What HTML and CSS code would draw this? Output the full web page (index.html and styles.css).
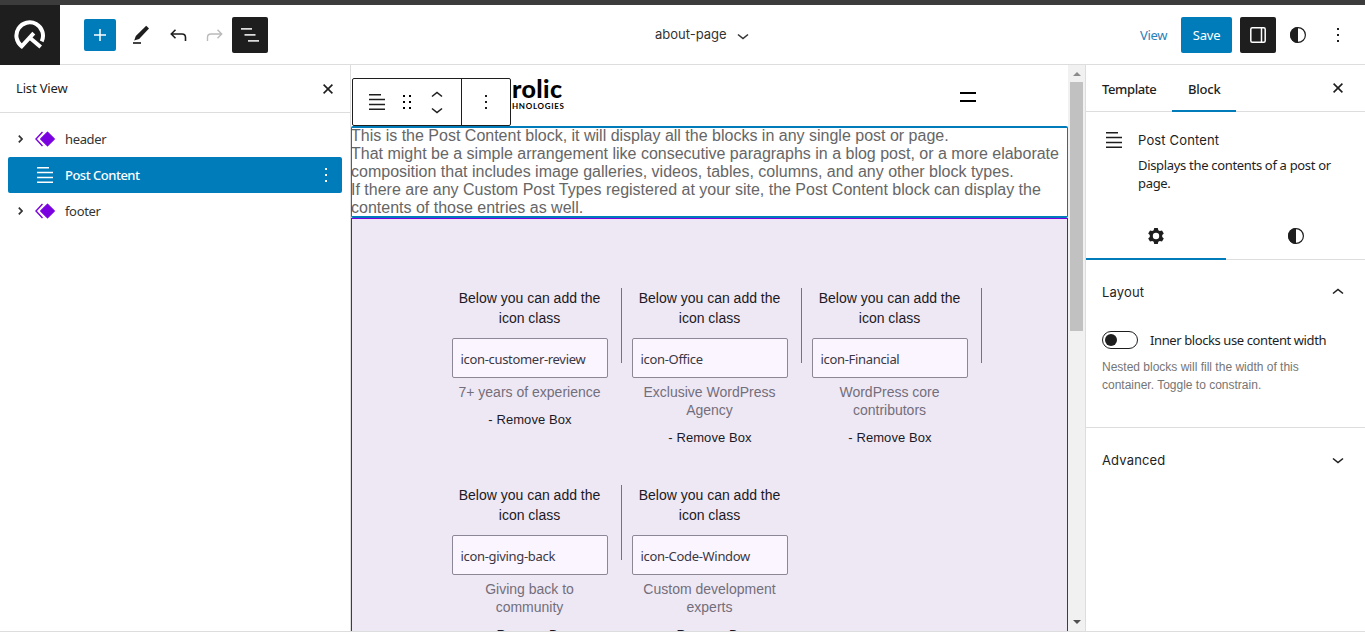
FILE: index.html
```html
<!DOCTYPE html>
<html lang="en">
<head>
<meta charset="utf-8">
<title>about-page</title>
<link rel="stylesheet" href="styles.css">
</head>
<body>
<svg width="0" height="0" class="defs">
  <symbol id="diamond" viewBox="0 0 20 16"><path d="M12.500 1.200 19.300 8l-6.800 6.800L5.700 8z" fill="#7a00df" stroke="#7a00df" stroke-linejoin="round" stroke-width="1.200"/><path d="M7.500 1 1 8l6.500 7" fill="none" stroke="#7a00df" stroke-width="1.400"/></symbol>
  <symbol id="lines" viewBox="0 0 16 16"><path d="M0 16h16v-1.500H0zM0 11.200h16V9.700H0zM0 4.800v1.500h16V4.800zM12 0H0v1.500h12z" fill="currentColor"/></symbol>
  <symbol id="dots" viewBox="0 0 2 14"><path d="M0 0h2v2H0zM0 6h2v2H0zM0 12h2v2H0z" fill="currentColor"/></symbol>
  <symbol id="down" viewBox="0 0 12 7"><path d="M1 1.500l5 4 5-4" fill="none" stroke="currentColor" stroke-width="1.600"/></symbol>
  <symbol id="up" viewBox="0 0 12 7"><path d="M1 5.500l5-4 5 4" fill="none" stroke="currentColor" stroke-width="1.600"/></symbol>
  <symbol id="close" viewBox="0 0 10 10"><path d="M.6.6l8.800 8.800M9.400.6.6 9.400" stroke="currentColor" stroke-width="1.600"/></symbol>
  <symbol id="right" viewBox="0 0 5 8"><path d="M.8.7 4 4 .8 7.300" fill="none" stroke="currentColor" stroke-width="1.700"/></symbol>
  <symbol id="half" viewBox="0 0 16 16"><circle cx="8" cy="8" r="7.400" fill="none" stroke="currentColor" stroke-width="1.200"/><path d="M8 0a8 8 0 0 0 0 16z" fill="currentColor"/></symbol>
</svg>

<div class="strip"></div>
<header class="topbar">
  <div class="logo">
    <svg width="32" height="30" viewBox="0 0 32 30" fill="none" stroke="#fff" stroke-width="4"><path d="M27.700 21.400A13.300 13.300 0 1 0 7.700 26.300L19.800 13.200"/><path d="M15.200 17.200 26.700 27"/></svg>
  </div>
  <div class="tools">
    <button class="add"><svg width="12" height="12" viewBox="0 0 12 12"><path d="M6 0v12M0 6h12" stroke="#fff" stroke-width="1.500"/></svg></button>
    <svg class="pencil" width="17" height="20" viewBox="0 0 17 20"><path d="M13.200.8 16 3.400 6.100 14.100 1.200 15.600 2.800 10.900z" fill="#1e1e1e"/><path d="M0 17h8v2H0z" fill="#444"/></svg>
    <svg class="undo" width="17" height="13" viewBox="0 0 17 13" fill="none" stroke="#1e1e1e" stroke-width="1.600"><path d="M5.500.8 1.300 5l4.200 4.200M1.500 5H12q3.500 0 3.500 3.500V12"/></svg>
    <svg class="redo" width="17" height="13" viewBox="0 0 17 13" fill="none" stroke="#bbb" stroke-width="1.400"><path d="M11.500.8 15.700 5l-4.200 4.200M15.500 5H5Q1.500 5 1.500 8.500V12"/></svg>
    <button class="dark"><svg width="18" height="14" viewBox="0 0 18 14" fill="#ddd"><path d="M0 0h11v1.800H0zM3.500 6h11v1.800h-11zM7 12h11v1.800H7z"/></svg></button>
  </div>
  <div class="doc"><span>about-page</span><svg width="12" height="7"><use href="#down"/></svg></div>
  <div class="actions">
    <a class="view">View</a>
    <button class="save">Save</button>
    <button class="dark"><svg width="16" height="16" viewBox="0 0 16 16" fill="none" stroke="#fff"><rect x=".8" y=".8" width="14.400" height="14.400" rx="1.500" stroke-width="1.500"/><path d="M11.500 1v14" stroke-width="1.500"/></svg></button>
    <svg class="contrast" width="16" height="16"><use href="#half"/></svg>
    <svg class="more" width="2" height="14"><use href="#dots"/></svg>
  </div>
</header>

<main class="workspace">
  <aside class="list">
    <div class="list-head"><span>List View</span><svg width="10" height="10"><use href="#close"/></svg></div>
    <div class="rows">
      <div class="row"><svg class="arrow" width="5" height="8"><use href="#right"/></svg><svg class="kind" width="20" height="16"><use href="#diamond"/></svg><span>header</span></div>
      <div class="row selected"><svg class="kind lines" width="16" height="16"><use href="#lines"/></svg><span class="sel-name">Post Content</span><svg class="row-more" width="2" height="14"><use href="#dots"/></svg></div>
      <div class="row"><svg class="arrow" width="5" height="8"><use href="#right"/></svg><svg class="kind" width="20" height="16"><use href="#diamond"/></svg><span>footer</span></div>
    </div>
  </aside>

  <section class="canvas">
    <div class="page">
      <div class="site-head">
        <div class="brand"><b>rolic</b><small>HNOLOGIES</small></div>
        <i class="burger"></i>
        <div class="toolbar">
          <div class="group">
            <svg width="16" height="16"><use href="#lines"/></svg>
            <svg width="8" height="14" viewBox="0 0 8 14"><path d="M0 0h2v2H0zM6 0h2v2H6zM0 6h2v2H0zM6 6h2v2H6zM0 12h2v2H0zM6 12h2v2H6z"/></svg>
            <span class="movers"><svg width="12" height="7"><use href="#up"/></svg><svg width="12" height="7"><use href="#down"/></svg></span>
          </div>
          <div class="group opts"><svg width="2" height="14"><use href="#dots"/></svg></div>
        </div>
      </div>
      <div class="post">
        <p class="l1">This is the Post Content block, it will display all the blocks in any single post or page.</p>
        <p>That might be a simple arrangement like consecutive paragraphs in a blog post, or a more elaborate<br>composition that includes image galleries, videos, tables, columns, and any other block types.</p>
        <p>If there are any Custom Post Types registered at your site, the Post Content block can display the<br>contents of those entries as well.</p>
      </div>
      <div class="boxes">
        <div class="box ruled"><h4>Below you can add the<br>icon class</h4><div class="field">icon-customer-review</div><p>7+ years of experience</p><span>- Remove Box</span></div>
        <div class="box ruled"><h4>Below you can add the<br>icon class</h4><div class="field">icon-Office</div><p>Exclusive WordPress<br>Agency</p><span>- Remove Box</span></div>
        <div class="box ruled"><h4>Below you can add the<br>icon class</h4><div class="field">icon-Financial</div><p>WordPress core<br>contributors</p><span>- Remove Box</span></div>
        <div class="box ruled"><h4>Below you can add the<br>icon class</h4><div class="field">icon-giving-back</div><p>Giving back to<br>community</p><span>- Remove Box</span></div>
        <div class="box"><h4>Below you can add the<br>icon class</h4><div class="field">icon-Code-Window</div><p>Custom development<br>experts</p><span>- Remove Box</span></div>
      </div>
    </div>
    <div class="scroll">
      <svg width="8" height="4" viewBox="0 0 8 4"><path d="M4 0l4 4H0z" fill="#8b8b8b"/></svg>
      <div class="thumb"></div>
      <svg width="8" height="4" viewBox="0 0 8 4"><path d="M4 4l4-4H0z" fill="#505050"/></svg>
    </div>
  </section>

  <aside class="settings">
    <div class="tabs"><span class="tab first">Template</span><span class="tab active">Block</span><svg width="10" height="10"><use href="#close"/></svg></div>
    <div class="card">
      <svg width="16" height="16"><use href="#lines"/></svg>
      <div><h2>Post Content</h2><p>Displays the contents of a post or<br>page.</p></div>
    </div>
    <div class="subtabs">
      <div class="subtab on"><svg width="16" height="16" viewBox="-8 -8 16 16"><path d="M-1.800-8h3.600l.5 2.200 1.500.8L6-5.600l1.800 3L6.200-1v2l1.600 1.600-1.800 3L3.800 5l-1.500.8L1.800 8h-3.600l-.5-2.200L-3.800 5-6 5.600l-1.800-3L-6.200 1v-2l-1.600-1.600 1.800-3L-3.800-5l1.500-.8z" fill="#1e1e1e"/><circle r="3.200" fill="#fff"/></svg></div>
      <div class="subtab styles"><svg width="16" height="16"><use href="#half"/></svg></div>
    </div>
    <div class="panel layout">
      <div class="panel-head"><span>Layout</span><svg width="12" height="7"><use href="#up"/></svg></div>
      <div class="toggle-row"><span class="toggle"></span><span class="label">Inner blocks use content width</span></div>
      <p class="help">Nested blocks will fill the width of this<br>container. Toggle to constrain.</p>
    </div>
    <div class="panel"><div class="panel-head"><span>Advanced</span><svg width="12" height="7"><use href="#down"/></svg></div></div>
  </aside>
</main>
<footer class="bottom"></footer>
</body>
</html>
```
FILE: styles.css
```css
* { box-sizing: border-box; }
body { margin: 0; width: 1365px; height: 635px; overflow: hidden; display: flex; flex-direction: column; background: #fff; color: #1e1e1e; font: 13px/18px "Noto Sans", "Open Sans", sans-serif; letter-spacing: -.35px; }
svg { display: block; flex: none; }
p, h2, h4 { margin: 0; font-weight: 400; }
button { border: 0; padding: 0; font: inherit; letter-spacing: inherit; display: flex; align-items: center; justify-content: center; border-radius: 2px; flex: none; }
.defs { position: absolute; }
.strip { height: 5px; background: #3c3c3c; flex: none; }
.topbar { height: 60px; flex: none; display: grid; grid-template-columns: 60px 290px 1fr 290px; border-bottom: 1px solid #ddd; }
.logo { width: 60px; height: 60px; background: #1e1e1e; padding: 15px 0 0 14px; }
.tools { display: flex; align-items: center; padding-left: 24px; height: 60px; }
.add { width: 32px; height: 32px; background: #007cba; }
.pencil { margin: 0 0 1px 17px; }
.undo { margin-left: 20px; }
.redo { margin: 0 9px 0 19px; }
.dark { width: 36px; height: 36px; background: #1e1e1e; }
.doc { display: flex; align-items: center; gap: 10px; height: 58px; padding-left: 305px; font-family: Inter, sans-serif; letter-spacing: 0; color: #333; }
.doc svg { margin-top: 4px; }
.actions { display: flex; align-items: center; justify-content: flex-end; height: 60px; padding-right: 26px; }
.view { color: #2a80b9; margin-right: 14px; }
.save { width: 51px; height: 36px; background: #007cba; color: #fff; margin-right: 8px; font-size: 13px; letter-spacing: -.2px; }
.contrast { margin: 0 31px 0 14px; }

.workspace { flex: none; height: 566px; display: grid; grid-template-columns: 351px 734px 280px; overflow: hidden; }
.list { border-right: 1px solid #ddd; }
.list-head { height: 48px; border-bottom: 1px solid #ddd; display: flex; align-items: center; justify-content: space-between; padding: 0 17px 0 16px; letter-spacing: -.15px; }
.list-head span { margin-top: -2px; }
.rows { padding: 8px; }
.row { height: 36px; display: flex; align-items: center; padding-left: 10px; color: #333; }
.row .kind { margin: 0 10px 0 12px; }
.row .kind.lines { margin: 0 12px 0 19px; }
.row.selected { background: #007cba; color: #fff; border-radius: 2px; }
.sel-name { font-weight: 500; letter-spacing: -.5px; }
.row-more { margin: 0 15px 0 auto; }

.canvas { display: grid; grid-template-columns: 717px 17px; overflow: hidden; font-family: "Liberation Sans", Arial, sans-serif; letter-spacing: 0; }
.page { overflow: hidden; }
.site-head { height: 61px; position: relative; display: flex; justify-content: space-between; padding: 11px 92px 0 161px; }
.brand { display: flex; flex-direction: column; color: #000; }
.brand b { font: 900 25px/25px Lato, sans-serif; letter-spacing: .4px; }
.brand small { font: 700 8px/10px Lato, sans-serif; letter-spacing: .7px; }
.burger { width: 16px; height: 10px; margin-top: 16px; border: solid #000; border-width: 2px 0; }
.toolbar { position: absolute; left: 1px; top: 13px; width: 159px; height: 48px; background: #fff; border: 1px solid #1e1e1e; border-radius: 2px; display: flex; }
.group { width: 109px; display: flex; align-items: center; gap: 18px; padding-left: 16px; border-right: 1px solid #1e1e1e; }
.group.opts { border: 0; width: 48px; padding-left: 23px; }
.movers { display: flex; flex-direction: column; gap: 9px; margin-left: 2px; }
.post { height: 92px; border: 2px solid #007cba; border-left-width: 1px; border-right-width: 1px; border-radius: 2px; color: #666; font-size: 16px; line-height: 18px; white-space: nowrap; }
.post p { margin-left: -1px; }
.post .l1 { margin-top: -1px; }
.boxes { height: 440px; background: #eee8f4; border: solid #7a00df; border-width: 1px 1px 0; padding: 69px 0 0 88px; display: grid; grid-template-columns: repeat(3, 180px); grid-auto-rows: 197px; color: #1c1924; }
.box { position: relative; padding: 0 12px; text-align: center; font-size: 14px; line-height: 18px; white-space: nowrap; }
.ruled::after { content: ""; position: absolute; left: 181px; top: 0; width: 1px; height: 75px; background: #777281; }
.box h4 { font-size: 14px; line-height: 20px; margin-right: 1px; }
.field { height: 40px; margin: 10px 0 5px; border: 1px solid #8c8796; border-radius: 2px; background: #faf5ff; text-align: left; padding-left: 7.500px; font: 13px/40px "Noto Sans", sans-serif; letter-spacing: -.32px; color: #3b3744; }
.box p { color: #736e7b; margin-right: 1px; }
.box span { display: block; margin-top: 10px; font-size: 13px; letter-spacing: .08px; }
.scroll { background: #f1f1f1; display: flex; flex-direction: column; align-items: center; padding: 7px 0; }
.thumb { width: 13px; height: 249px; background: #c1c1c1; margin: 6px 0 auto; }

.settings { border-left: 1px solid #ddd; }
.tabs { height: 47px; border-bottom: 1px solid #ddd; display: flex; padding-right: 22px; }
.tab { padding: 15px 0 0 16px; height: 47px; width: 64px; font-weight: 500; letter-spacing: -.4px; }
.tab.first { width: 86px; }
.tab.active { border-bottom: 2px solid #007cba; letter-spacing: -.2px; }
.tabs svg { margin: 18px 0 0 auto; }
.card { display: flex; gap: 16px; padding: 20px 0 0 20px; height: 101px; }
.card h2, .panel-head { font: 400 13px/18px Inter, sans-serif; letter-spacing: .15px; }
.card p { margin-top: 7px; letter-spacing: -.32px; }
.card h2 { margin-top: -1px; }
.subtabs { height: 47px; display: grid; grid-template-columns: 140px 1fr; border-bottom: 1px solid #ddd; }
.subtab { height: 47px; display: flex; align-items: center; justify-content: center; }
.on { border-bottom: 2px solid #007cba; }
.styles { padding: 0 0 2px 1px; }
.panel { padding: 23px 21px 0 16px; }
.layout { height: 168px; border-bottom: 1px solid #ddd; }
.panel-head { display: flex; justify-content: space-between; align-items: center; }
.layout .panel-head svg { margin-top: -2px; }
.toggle-row { display: flex; align-items: center; gap: 12px; margin-top: 30px; height: 18px; white-space: nowrap; letter-spacing: -.4px; }
.toggle { width: 36px; height: 18px; border: 1px solid #1e1e1e; border-radius: 9px; padding: 2px; flex: none; }
.toggle::before { content: ""; display: block; width: 12px; height: 12px; border-radius: 50%; background: #1e1e1e; }
.help { margin-top: 9px; color: #757575; font: 12px/18px "Liberation Sans", Arial, sans-serif; letter-spacing: 0; white-space: nowrap; }
.bottom { height: 4px; border-top: 1px solid #ddd; }
```
